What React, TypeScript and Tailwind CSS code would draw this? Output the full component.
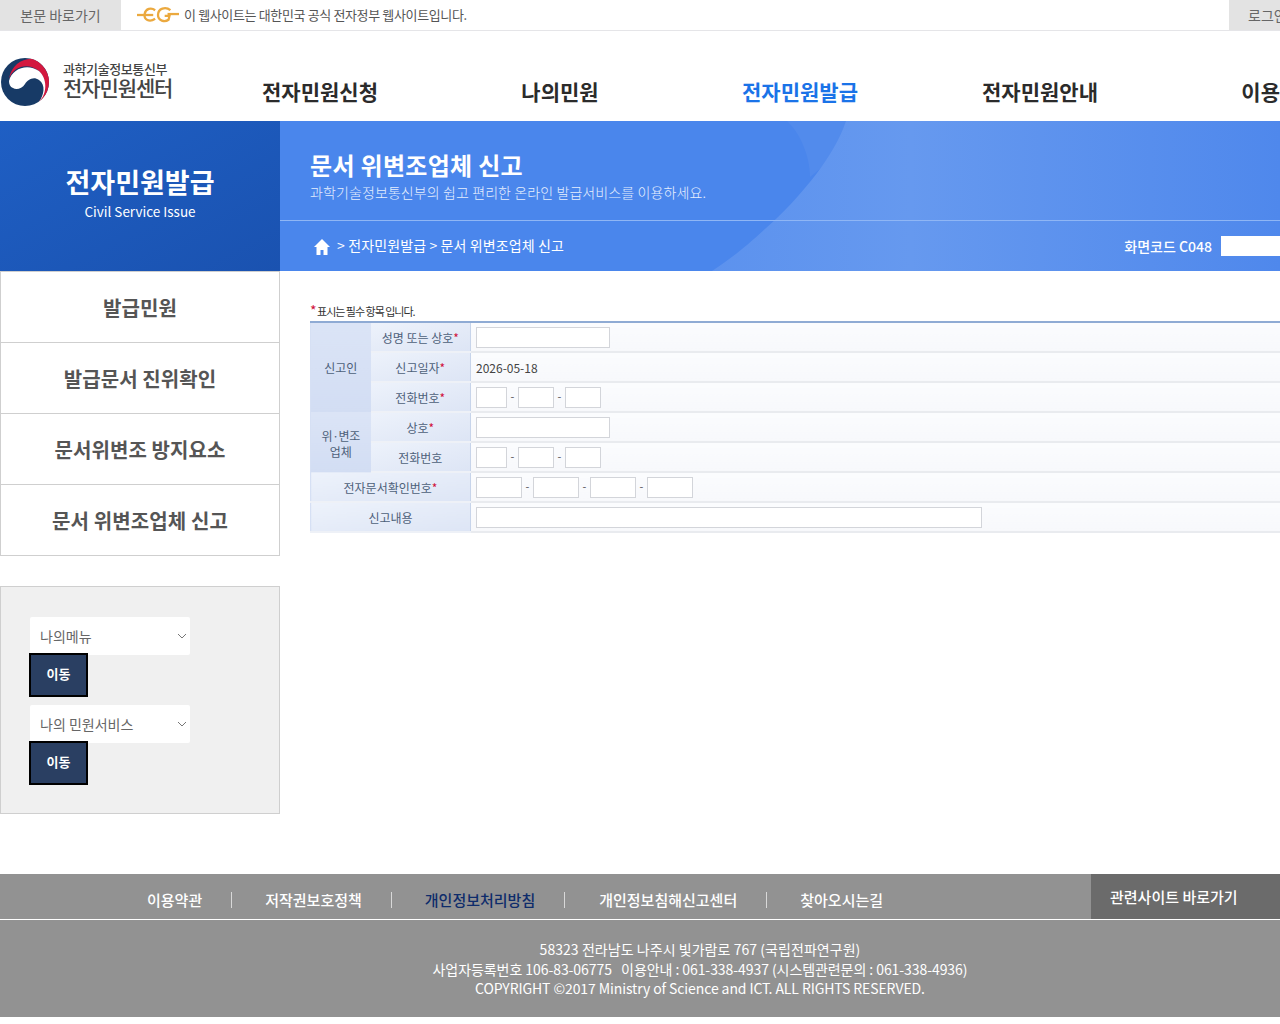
import React from "react";

const font = { fontFamily: '"Noto Sans CJK KR", "Noto Sans", sans-serif' };

function Req() {
  return <span className="text-[#d0103a]">*</span>;
}

function Logo() {
  return (
    <svg width="50" height="50" viewBox="0 0 50 50" className="block shrink-0">
      <circle cx="24" cy="25" r="24" fill="#173a66" />
      <path d="M8 22 C10 9 20 2 30 1.8 A24 24 0 0 1 38 44.5 C46 35 46 22 38 14 C28 6 13 8 8 22 Z" fill="#d3183f" />
      <path d="M8 24 C11 11 27 6 38 14 C46 21 47 36 38 45 C43 38 45 28 38 23 C32 19 27 23 24 27 C21 32 15 33 12 31 C9 30 8 27 8 24 Z" fill="#fff" />
    </svg>
  );
}

function EgLogo() {
  return (
    <svg width="42" height="18" viewBox="0 0 44 18" className="block shrink-0" fill="none" stroke="#eba93f" strokeWidth="2.4">
      <path d="M0 9 H17" />
      <path d="M19 4 C15 1 9 2 8 8 C7 14 13 17 19 13" />
      <path d="M35 4 C30 0 22 2 22 9 C22 15 29 17 33 14 L34 10 H29" />
      <path d="M32 8 H44" />
    </svg>
  );
}

function Field({ w }: { w: string }) {
  return <span className={`inline-block h-[21px] bg-white border border-[#d3d5da] ${w}`} />;
}

function Dash() {
  return <span className="text-[11px] text-[#555] w-[11px] text-center leading-[19px]">-</span>;
}

const thBase = "bg-gradient-to-br from-[#edf2fb] to-[#dde5f5] border-b-2 border-[#eef1f7] text-center text-[12px] text-[#4d6079] font-normal p-0 pt-[2px]";
const tdBase = "bg-gradient-to-b from-[#fbfcfe] to-[#f7f8fb] border-b-2 border-[#e9ebef] border-l border-l-[#c7d4ea] p-0 pl-[5px] pt-[1px] h-[30px]";
const groupBase = "bg-gradient-to-b from-[#dbe4f6] to-[#d2ddf3] text-center text-[12px] text-[#4d6079] font-normal leading-[16px] p-0 pt-[1px]";

function FooterLink({ children, active, pl, pr, sep }: { children: React.ReactNode; active?: boolean; pl: string; pr: string; sep?: boolean }) {
  return (
    <a className={`h-[16px] flex items-center text-[15px] font-medium whitespace-nowrap ${pl} ${pr} ${sep ? "border-r border-[#d8d8d8]" : ""} ${active ? "text-[#0e2c6b] font-bold" : "text-white"}`}>
      {children}
    </a>
  );
}

function SideSelect({ label }: { label: string }) {
  return (
    <div className="flex flex-col items-start">
      <div className="w-[160px] h-[38px] bg-white rounded-[2px] flex items-center justify-between pl-[10px] pr-[3px] text-[14px] text-[#666] ml-[30px]">
        <span>{label}</span>
        <svg width="10" height="6" viewBox="0 0 10 6" fill="none" stroke="#777" strokeWidth="1"><path d="M1 1 L5 5 L9 1" /></svg>
      </div>
      <button className="ml-[29px] -mt-[2px] w-[59px] h-[44px] pb-[2px] bg-[#2a3f62] border-[2px] border-black text-white text-[13px] font-bold">이동</button>
    </div>
  );
}

export default function App() {
  const nav = ["전자민원신청", "나의민원", "전자민원발급", "전자민원안내", "이용안내"];
  const side = ["발급민원", "발급문서 진위확인", "문서위변조 방지요소", "문서 위변조업체 신고"];
  return (
    <div style={font} className="w-[1280px] min-h-[1024px] overflow-hidden bg-white">
      <div className="h-[31px] flex border-b border-[#e5e5e8] relative">
        <div className="w-[121px] bg-[#e3e3e3] flex items-center justify-center text-[14px] text-[#666]">본문 바로가기</div>
        <div className="flex items-center pl-[16px] gap-[5px] text-[13px] text-[#555] tracking-[-0.36px]">
          <EgLogo />
          <span>이 웹사이트는 대한민국 공식 전자정부 웹사이트입니다.</span>
        </div>
        <div className="ml-auto w-[51px] bg-[#e3e3e3] flex items-center pl-[19px] text-[14px] text-[#666] whitespace-nowrap overflow-hidden">로그인</div>
      </div>

      <div className="h-[90px] flex">
        <div className="w-[200px] shrink-0 flex items-start pt-[26px] pl-[1px] gap-[12px]">
          <Logo />
          <div className="flex flex-col pt-[3px]">
            <span className="text-[13px] leading-[17px] font-medium text-[#444] tracking-[-0.4px] whitespace-nowrap">과학기술정보통신부</span>
            <span className="text-[21px] leading-[21px] font-medium text-[#444] tracking-[-1.1px] whitespace-nowrap">전자민원센터</span>
          </div>
        </div>
        {nav.map((n, i) => (
          <div key={n} className={`w-[240px] shrink-0 text-center pt-[44px] text-[21px] leading-[32px] font-bold whitespace-nowrap ${i === 2 ? "text-[#1a73e8]" : "text-[#2b2b2b]"}`}>
            {n}
          </div>
        ))}
      </div>

      <div className="h-[150px] flex">
        <div className="w-[280px] bg-gradient-to-br from-[#1f5fc4] to-[#1a52b0] flex flex-col items-center pt-[41px]">
          <div className="text-[27px] leading-[40px] font-bold text-white">전자민원발급</div>
          <div className="text-[13.5px] leading-[19px] text-white">Civil Service Issue</div>
        </div>
        <div className="flex-1 relative bg-[#4a86ec] overflow-hidden">
          <svg className="absolute inset-0" width="1000" height="150" viewBox="0 0 1000 150">
            <defs>
              <linearGradient id="g1" x1="0" x2="1" y1="0" y2="0">
                <stop offset="0" stopColor="#5c92ee" />
                <stop offset="0.35" stopColor="#6699ef" />
                <stop offset="1" stopColor="#4f88ec" />
              </linearGradient>
            </defs>
            <path d="M507 0 C520 12 530 35 530 56 L600 0 Z" fill="#528bec" />
            <path d="M566 0 C555 35 520 75 497 97 C470 122 455 135 432 150 L1000 150 L1000 0 Z" fill="url(#g1)" />
          </svg>
          <div className="relative h-[100px] border-b border-[#8fb6f5] pl-[30px] pt-[27px]">
            <div className="text-[24px] leading-[34px] font-bold text-white tracking-[0.3px]">문서 위변조업체 신고</div>
            <div className="text-[14px] leading-[18px] font-light text-[#e6effe] tracking-[0.1px] mt-[1px]">과학기술정보통신부의 쉽고 편리한 온라인 발급서비스를 이용하세요.</div>
          </div>
          <div className="relative h-[50px] flex items-center pl-[34px] text-[14px] text-white">
            <svg width="16" height="16" viewBox="0 0 16 16" fill="#fff" className="mr-[7px] mt-[2px]"><path d="M8 0 L16 8 H13.5 V16 H9.5 V11 H6.5 V16 H2.5 V8 H0 Z" /></svg>
            <span className="tracking-[0.12px] -mt-[2px]">&gt; 전자민원발급 &gt; 문서 위변조업체 신고</span>
            <span className="ml-auto font-medium text-[14px] mr-[9px]">화면코드 C048</span>
            <span className="w-[59px] h-[20px] bg-white" />
          </div>
        </div>
      </div>

      <div className="flex h-[603px]">
        <div className="w-[280px] shrink-0">
          <div className="border border-[#cfcfcf]">
            {side.map((s, i) => (
              <div key={s} className={`flex items-center justify-center pt-[2px] text-[20px] font-bold text-[#555] tracking-[0.1px] ${i > 0 ? "h-[71px] border-t border-[#cfcfcf]" : "h-[70px]"}`}>
                {s}
              </div>
            ))}
          </div>
          <div className="mt-[30px] h-[228px] bg-[#f0f0f0] border border-[#cfcfcf] pt-[30px]">
            <div className="-ml-px flex flex-col">
              <SideSelect label="나의메뉴" />
              <div className="h-[8px]" />
              <SideSelect label="나의 민원서비스" />
            </div>
          </div>
        </div>

        <div className="flex-1 pl-[30px] pt-[31px] min-w-0">
          <div className="text-[11px] leading-[19px] text-[#333] tracking-[-1px]">
            <span className="text-[#d0103a] text-[14px] leading-[14px]">*</span> 표시는 필수 항목 입니다.
          </div>
          <table className="w-[1000px] border-t-2 border-[#8fabd4] border-collapse table-fixed border-l border-l-[#d6e0f4]">
            <colgroup>
              <col className="w-[60px]" />
              <col className="w-[100px]" />
              <col />
            </colgroup>
            <tbody>
              <tr className="h-[30px]">
                <th rowSpan={3} className={groupBase}>신고인</th>
                <th className={thBase}>성명 또는 상호<Req /></th>
                <td className={tdBase}><div className="flex"><Field w="w-[134px]" /></div></td>
              </tr>
              <tr className="h-[30px]">
                <th className={thBase}>신고일자<Req /></th>
                <td className={`${tdBase} text-[12px] text-[#444]`}>2026-05-18</td>
              </tr>
              <tr className="h-[30px]">
                <th className={thBase}>전화번호<Req /></th>
                <td className={tdBase}>
                  <div className="flex"><Field w="w-[31px]" /><Dash /><Field w="w-[36px]" /><Dash /><Field w="w-[36px]" /></div>
                </td>
              </tr>
              <tr className="h-[30px]">
                <th rowSpan={2} className={`${groupBase} pt-[3px]`}><span className="tracking-[-0.4px]">위·변조</span><br />업체</th>
                <th className={thBase}>상호<Req /></th>
                <td className={tdBase}><div className="flex"><Field w="w-[134px]" /></div></td>
              </tr>
              <tr className="h-[30px]">
                <th className={thBase}>전화번호</th>
                <td className={tdBase}>
                  <div className="flex"><Field w="w-[31px]" /><Dash /><Field w="w-[36px]" /><Dash /><Field w="w-[36px]" /></div>
                </td>
              </tr>
              <tr className="h-[30px]">
                <th colSpan={2} className={thBase}>전자문서확인번호<Req /></th>
                <td className={tdBase}>
                  <div className="flex"><Field w="w-[46px]" /><Dash /><Field w="w-[46px]" /><Dash /><Field w="w-[46px]" /><Dash /><Field w="w-[46px]" /></div>
                </td>
              </tr>
              <tr className="h-[30px]">
                <th colSpan={2} className={thBase}>신고내용</th>
                <td className={tdBase}><div className="flex"><Field w="w-[506px]" /></div></td>
              </tr>
            </tbody>
          </table>
        </div>
      </div>

      <div className="h-[46px] bg-[#929292] border-b border-white flex items-start relative">
        <div className="flex items-center pt-[18px]">
          <FooterLink pl="pl-[147px]" pr="pr-[29px]" sep>이용약관</FooterLink>
          <FooterLink pl="pl-[33px]" pr="pr-[29px]" sep>저작권보호정책</FooterLink>
          <FooterLink pl="pl-[33px]" pr="pr-[29px]" active sep>개인정보처리방침</FooterLink>
          <FooterLink pl="pl-[34px]" pr="pr-[29px]" sep>개인정보침해신고센터</FooterLink>
          <FooterLink pl="pl-[33px]" pr="pr-[0px]">찾아오시는길</FooterLink>
        </div>
        <div className="ml-auto w-[189px] h-[45px] bg-[#6b6b6b] pl-[19px] pt-[12px] text-[15px] leading-[22px] font-medium text-white">관련사이트 바로가기</div>
      </div>
      <div className="h-[97px] bg-[#929292] pt-[20px] w-[1400px] text-center text-[14px] leading-[19.5px] text-white tracking-[-0.07px]">
        <div className="tracking-[0.05px]">58323 전라남도 나주시 빛가람로 767 (국립전파연구원)</div>
        <div className="whitespace-pre">사업자등록번호 106-83-06775   이용안내 : 061-338-4937 (시스템관련문의 : 061-338-4936)</div>
        <div className="tracking-[-0.1px]">COPYRIGHT ©2017 Ministry of Science and ICT. ALL RIGHTS RESERVED.</div>
      </div>
    </div>
  );
}
